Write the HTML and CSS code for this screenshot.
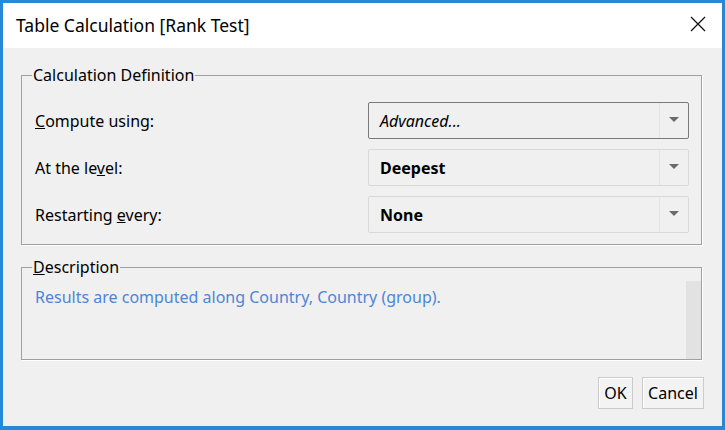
FILE: index.html
```html
<!DOCTYPE html>
<html lang="en">
<head>
    <meta charset="UTF-8">
    <meta name="viewport" content="width=device-width, initial-scale=1.0">
    <title>Table Calculation [Rank Test]</title>
    <link rel="stylesheet" href="styles.css">
</head>
<body>
    <div class="window">
        <div class="titlebar">
            <span class="title">Table Calculation [Rank Test]</span>
            <svg class="close" width="16" height="16" viewBox="0 0 16 16">
                <path d="M1 1 L15 15 M15 1 L1 15" stroke="#111" stroke-width="1.3" fill="none"/>
            </svg>
        </div>

        <div class="content">
            <fieldset class="group definition">
                <legend>Calculation Definition</legend>
                <div class="form-grid">
                    <label><u>C</u>ompute using:</label>
                    <div class="combo active">
                        <span class="value italic">Advanced...</span>
                        <span class="arrow"></span>
                    </div>

                    <label>At the le<u>v</u>el:</label>
                    <div class="combo">
                        <span class="value bold">Deepest</span>
                        <span class="arrow"></span>
                    </div>

                    <label>Restarting <u>e</u>very:</label>
                    <div class="combo">
                        <span class="value bold">None</span>
                        <span class="arrow"></span>
                    </div>
                </div>
            </fieldset>

            <fieldset class="group description">
                <legend><u>D</u>escription</legend>
                <div class="desc-box">
                    <div class="desc-text">Results are computed along Country, Country (group).</div>
                    <div class="scrollbar"></div>
                </div>
            </fieldset>

            <div class="buttons">
                <button class="btn ok">OK</button>
                <button class="btn cancel">Cancel</button>
            </div>
        </div>
    </div>
</body>
</html>
```

FILE: styles.css
```css
body {
    margin: 0;
    font-family: 'Noto Sans', 'Open Sans', sans-serif;
    font-size: 16px;
    color: #000;
}

.window {
    width: 725px;
    height: 430px;
    box-sizing: border-box;
    border: 3px solid #2888d8;
    border-bottom-width: 4px;
    background: #f0f0f0;
    display: flex;
    flex-direction: column;
}

.titlebar {
    height: 45px;
    background: #fff;
    display: flex;
    align-items: center;
    justify-content: space-between;
    padding: 0 16px 0 13px;
    flex-shrink: 0;
}

.title {
    font-size: 17.5px;
    line-height: 20px;
    margin-top: -2px;
}

.close {
    margin-top: -4px;
}

.content {
    padding: 18px 20px 0 18px;
}

.group {
    margin: 0;
    border: 1px solid #a0a0a0;
    box-shadow: 1px 1px 0 #fff;
    min-width: 0;
}

.group legend {
    font-size: 16px;
    line-height: 18px;
    padding: 0 1px;
    margin-left: -3px;
}

.definition {
    padding: 18px 12px 11px 13px;
}

.form-grid {
    display: grid;
    grid-template-columns: 333px 321px;
    grid-auto-rows: 37px;
    row-gap: 10px;
    align-items: center;
}

.form-grid label {
    line-height: 20px;
}

.combo {
    height: 37px;
    box-sizing: border-box;
    border: 1px solid #d9d9d9;
    border-radius: 2px;
    display: flex;
    align-items: stretch;
}

.combo.active {
    border-color: #7a7a7a;
}

.combo .value {
    flex: 1;
    display: flex;
    align-items: center;
    padding-left: 11px;
    font-size: 16px;
}

.italic {
    font-style: italic;
}

.bold {
    font-weight: bold;
}

.combo .arrow {
    width: 28px;
    border-left: 1px solid #e2e2e2;
    display: flex;
    align-items: center;
    justify-content: center;
}

.combo .arrow::after {
    content: "";
    border-left: 5px solid transparent;
    border-right: 5px solid transparent;
    border-top: 5px solid #6a6a6a;
    margin-top: -2px;
}

.description {
    margin-top: 13px;
    padding: 5px 0 0 0;
}

.description legend {
    margin-left: 10px;
}

.desc-box {
    height: 78px;
    display: flex;
}

.desc-text {
    flex: 1;
    padding: 7px 0 0 13px;
    color: #4d86d6;
    line-height: 18px;
}

.scrollbar {
    width: 15px;
    background: #e2e2e2;
}

.buttons {
    display: flex;
    justify-content: flex-end;
    gap: 9px;
    margin-top: 17px;
    margin-right: -2px;
}

.btn {
    font-family: 'Noto Sans', 'Open Sans', sans-serif;
    font-size: 16px;
    height: 32px;
    padding: 0;
    background: #f3f3f3;
    border: 1px solid #cbcbcb;
    box-shadow: inset 1px 1px 0 #fff;
    color: #000;
}

.btn.ok {
    width: 35px;
}

.btn.cancel {
    width: 62px;
}
```
